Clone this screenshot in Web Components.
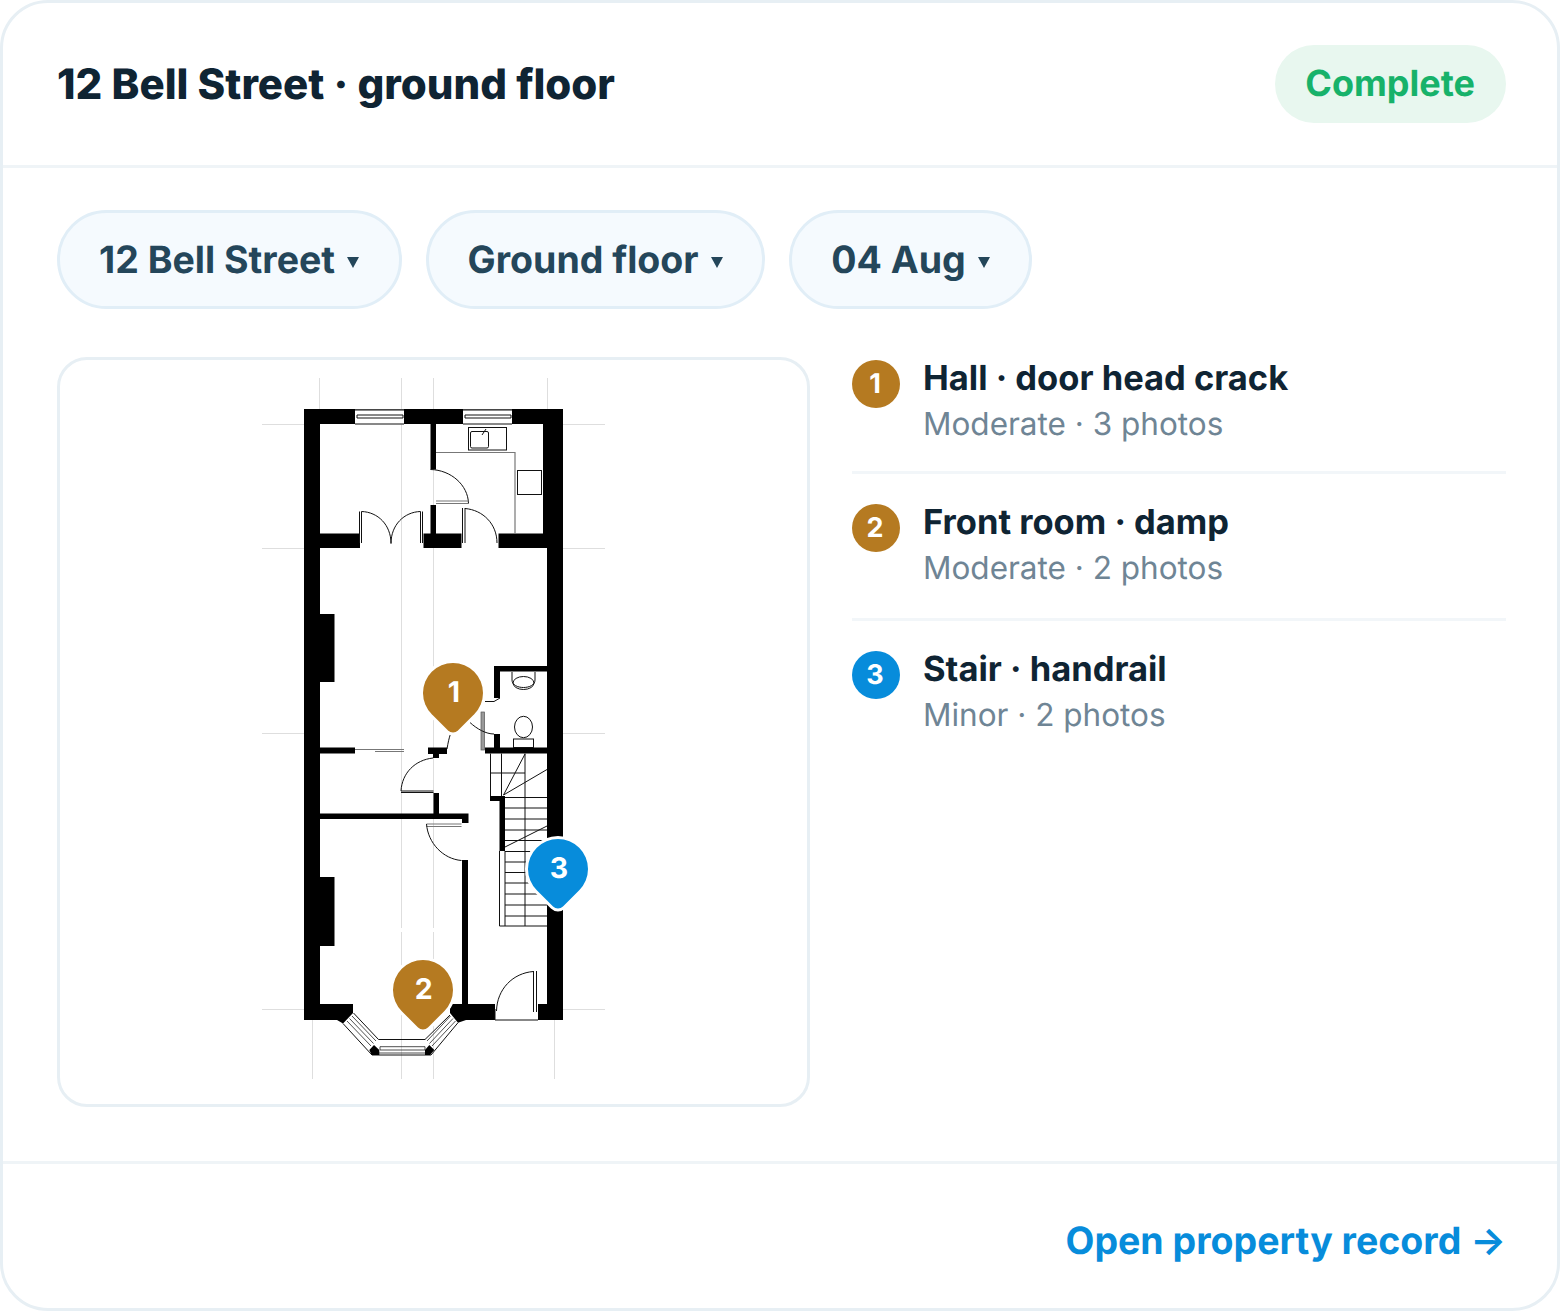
<!doctype html>
<html lang="en">
<head>
<meta charset="utf-8">
<title>Floor plan card</title>
<style>
  html, body { margin: 0; background: #fff; }
  body { font-family: Inter, "Liberation Sans", sans-serif; text-rendering: geometricPrecision; }
</style>
</head>
<body>

<template id="plan-card-template">
  <style>
    :host { display: flex; flex-direction: column; box-sizing: border-box; width: 1560px; height: 1311px; background: #fff; border: 3px solid #e7eff4; border-radius: 48px; color: #0f2433; overflow: hidden; }
    header { display: flex; align-items: center; justify-content: space-between; box-sizing: border-box; height: 165px; padding: 0 51px 0 54px; border-bottom: 3px solid #eff4f7; flex: none; }
    h1 { margin: 2px 0 0; font-size: 42px; line-height: 52px; font-weight: 800; }
    main { flex: 1; box-sizing: border-box; padding: 42px 51px 0 54px; }
    .filters { display: flex; gap: 24px; margin-bottom: 48px; }
    .body { display: grid; grid-template-columns: 753px 1fr; column-gap: 42px; }
    footer { display: flex; justify-content: flex-end; align-items: center; box-sizing: border-box; height: 147px; padding: 10px 51px 0 54px; border-top: 3px solid #eff4f7; flex: none; }
  </style>
  <header>
    <h1><slot name="title"></slot></h1>
    <slot name="status"></slot>
  </header>
  <main>
    <div class="filters"><slot name="filters"></slot></div>
    <div class="body">
      <slot name="plan"></slot>
      <div><slot name="issues"></slot></div>
    </div>
  </main>
  <footer><slot name="footer"></slot></footer>
</template>

<template id="status-badge-template">
  <style>
    :host { display: inline-flex; align-items: center; box-sizing: border-box; height: 78px; padding: 0 31px 2px 30px; border-radius: 39px; background: #e8f7ef; color: #17b26a; font-size: 36px; font-weight: 700; }
  </style>
  <slot></slot>
</template>

<template id="filter-pill-template">
  <style>
    :host { display: inline-flex; align-items: center; box-sizing: border-box; height: 99px; padding: 2px 39.5px 0 39px; border: 3px solid #e1eef7; border-radius: 50px; background: #f5fafe; color: #24465a; font-size: 37.5px; font-weight: 700; white-space: nowrap; }
    .caret { margin: 3px 0 0 12px; width: 0; height: 0; border-left: 6px solid transparent; border-right: 6px solid transparent; border-top: 11px solid #24465a; }
  </style>
  <slot></slot><span class="caret"></span>
</template>

<template id="floor-plan-template">
  <style>
    :host { display: block; position: relative; box-sizing: border-box; width: 753px; height: 750px; border: 3px solid #e7eff4; border-radius: 30px; background: #fff; overflow: hidden; }
    svg { display: block; width: 746px; height: 743px; }
    .grid { stroke: #dedede; stroke-width: 1; fill: none; }
    .thin { stroke: #111; stroke-width: 1; fill: none; }
    .grey { stroke: #777; stroke-width: 1.2; fill: none; }
    .fine { stroke: #222; stroke-width: .8; fill: none; }
  </style>
  <svg viewBox="60 360 746 743" aria-hidden="true">
    <g class="grid">
      <path d="M319.5 378V409M401.5 378V928M401.5 932V1079M433.5 378V928M433.5 932V1079M547.5 378V409"/>
      <path d="M312.5 1020V1079M554.5 1020V1079"/>
      <path d="M262 424.5H304M563 424.5H605M262 548.5H304M563 548.5H605M262 733.5H304M563 733.5H605M262 1009.5H304M563 1009.5H605"/>
    </g>
    <!-- outer walls -->
    <path fill="#000" d="M304 409H563V1020H538V1004H547V548H543V424H512V424H320V1004H353V1013L343 1023.500L337 1020H304Z"/>
    <path fill="#000" d="M450 1004H495V1020H466L458 1022.700L450 1013Z"/>
    <!-- top windows -->
    <g>
      <rect x="355" y="409.5" width="49" height="15" fill="#fff"/>
      <rect x="463" y="409.5" width="49" height="15" fill="#fff"/>
      <path class="thin" d="M355 410H404M355 424H404M357 415H403M357 418H403M357 415V418M403 415V418M463 410H512M463 424H512M465 415H511M465 418H511M465 415V418M511 415V418"/>
    </g>
    <!-- upper partitions -->
    <path fill="#000" d="M430.5 424H436V469.5H430.5ZM430.5 505H436V533.5H430.5ZM320 533.5H360V548H320ZM423.5 533.5H461.5V548H423.5ZM498.5 533.5H543V548H498.5Z"/>
    <path class="thin" d="M359.5 511.5V543M361.5 511.5V543M361.5 511.5C378 512 391 525 391 543.5M420.5 511.5V543M422.5 511.5V543M420.5 511.5C404 512 391 525 391 543.5"/>
    <path class="thin" d="M462.5 508V543M465 508V543M465 508.5C483 510 497 524 497 543"/>
    <path class="thin" d="M430.5 469.5C451 470 468 485 468.5 503.5"/>
    <path class="grey" d="M436 503.5H468.5M436 501H468.5M436 452.5H515V533.5"/>
    <!-- kitchen fittings -->
    <rect class="thin" x="468.5" y="427.5" width="38" height="22.5"/>
    <rect class="thin" x="470.5" y="431.5" width="18" height="16.5" rx="1.5"/>
    <path class="thin" d="M482 435L486 429"/>
    <rect class="thin" x="517.5" y="470.5" width="24" height="24"/>
    <!-- chimney breasts -->
    <path fill="#000" d="M313 614H334.5V682H313ZM313 877H334.5V946H313Z"/>
    <!-- wc -->
    <path fill="#000" d="M494 666H547V671.5H500V698H494ZM494 734H500V748H494ZM320 747.5H355V753.5H320ZM428 747.5H447V754H439V758H433V754H428ZM485 747.5H547V753.5H485Z"/>
    <path class="thin" d="M485 701.5H494L500 698M512 672V680C512 690 535 690 535 680V672"/>
    <ellipse class="thin" cx="523.5" cy="683" rx="10.5" ry="6.5"/>
    <ellipse class="thin" cx="523.5" cy="727" rx="9" ry="10.7"/>
    <rect class="thin" x="513.5" y="739" width="20" height="8.5"/>
    <rect x="481" y="712" width="3.5" height="38" fill="#999" stroke="#555" stroke-width=".7"/>
    <path class="thin" d="M470 722.5C477 729 486 734 494 734"/>
    <path class="thin" d="M447 749C448 743 449 738 450.5 734"/>
    <path class="grey" d="M355 749.5H404M375 751.5H404"/>
    <!-- hall partition -->
    <path class="thin" d="M433 758C415 760 402 773 401 791M401 791H433.5M401 792.5H433.5"/>
    <path fill="#000" d="M433.5 793H439V813.5H433.5ZM320 813.5H468.5V823H462V819H320Z"/>
    <path class="grey" d="M426.5 824H461.5M426.5 826.5H461.5"/>
    <path class="thin" d="M426.5 824C428 843 443 859 461.5 860.5"/>
    <path fill="#000" d="M462 860H468V1004H462Z"/>
    <!-- stairs -->
    <path fill="#000" d="M490 796H505V851H499.5V801H490Z"/>
    <path class="thin" d="M490.5 753.5V796M501.5 753.5V796M490.5 773H525M525 753.5V926M499.5 851V926M505 851V926M499.5 926H547"/>
    <path class="thin" d="M505 797.5H547M505 808H547M505 819H547M505 830H547M505 840.5H547M505 851.5H547M505 862H547M505 872.5H547M505 883H547M505 894H547M505 905H547M505 916H547"/>
    <path class="thin" d="M503.5 795L525 754M503.5 795L547 769.5M505 847L547 826"/>
    <!-- entrance door -->
    <path class="thin" d="M533.5 971V1012M536.5 971V1012M533.5 971.5C513 973 497 989 496.5 1011M495 1009V1020M495 1020H538"/>
    <!-- bay window -->
    <path class="thin" d="M353.5 1013L378.5 1039.500H425L450 1015M343 1023.500L372 1055H431L458 1022.700"/>
    <path class="fine" d="M347 1021L371 1046M349.500 1018.500L373.500 1043.500M352 1016L376 1041M455.500 1021L432 1046M453 1018.500L429.500 1043.500M450.500 1016L427 1041M380 1046.700H425M380 1050H425M380 1046.700V1050M425 1046.700V1050M372 1053H431"/>
    <path fill="#000" d="M369.300 1050L374 1045L379.300 1050V1055H371.700ZM425 1050L429.300 1045L434.300 1050L430 1055H425Z"/>
  </svg>
  <slot></slot>
</template>

<template id="plan-pin-template">
  <style>
    :host { position: absolute; display: block; width: 60px; height: 60px; margin: -30px 0 0 -30px; }
    .drop { display: flex; align-items: center; justify-content: center; width: 60px; height: 60px; border-radius: 50% 50% 7px 50%; transform: rotate(45deg); background: var(--pin-color, #b57a21); box-shadow: 0 0 0 3px #fff; }
    .num { transform: rotate(-45deg) translate(1px, -1px); color: #fff; font-size: 28.5px; font-weight: 700; line-height: 1; }
  </style>
  <div class="drop"><span class="num"><slot></slot></span></div>
</template>

<template id="issue-item-template">
  <style>
    :host { display: grid; grid-template-columns: 48px 1fr; column-gap: 23px; box-sizing: border-box; padding: 30px 0 29px; border-bottom: 3px solid #f2f6f9; }
    :host(:first-child) { padding: 3px 0 26px; }
    :host(:last-child) { border-bottom: 0; }
    .num { display: flex; align-items: center; justify-content: center; box-sizing: border-box; width: 48px; height: 48px; padding: 0 2px 2px 0; border-radius: 50%; background: var(--pin-color, #b57a21); color: #fff; font-size: 27px; font-weight: 700; }
    .title { color: #0f2433; font-size: 34.5px; line-height: 42px; font-weight: 700; margin-top: -2px; }
    .meta { color: #6f8595; font-size: 31.5px; line-height: 42px; margin-top: 3px; }
  </style>
  <div class="num"><slot name="num"></slot></div>
  <div>
    <div class="title"><slot name="title"></slot></div>
    <div class="meta"><slot name="meta"></slot></div>
  </div>
</template>

<template id="record-link-template">
  <style>
    :host { display: inline-block; color: #078cdb; font-size: 37.5px; font-weight: 700; white-space: nowrap; }
  </style>
  <slot></slot>
</template>

<plan-card>
  <span slot="title">12 Bell Street · ground floor</span>
  <status-badge slot="status">Complete</status-badge>

  <filter-pill slot="filters">12 Bell Street</filter-pill>
  <filter-pill slot="filters">Ground floor</filter-pill>
  <filter-pill slot="filters">04 Aug</filter-pill>

  <floor-plan slot="plan">
    <plan-pin style="left:393px;top:333px">1</plan-pin>
    <plan-pin style="left:363px;top:630px">2</plan-pin>
    <plan-pin style="left:498px;top:509px;--pin-color:#078cdb">3</plan-pin>
  </floor-plan>

  <div slot="issues">
    <issue-item>
      <span slot="num">1</span>
      <span slot="title">Hall · door head crack</span>
      <span slot="meta">Moderate · 3 photos</span>
    </issue-item>
    <issue-item>
      <span slot="num">2</span>
      <span slot="title">Front room · damp</span>
      <span slot="meta">Moderate · 2 photos</span>
    </issue-item>
    <issue-item style="--pin-color:#078cdb">
      <span slot="num">3</span>
      <span slot="title">Stair · handrail</span>
      <span slot="meta">Minor · 2 photos</span>
    </issue-item>
  </div>

  <record-link slot="footer">Open property record →</record-link>
</plan-card>

<script>
  function register(tag) {
    const templ = document.querySelector('#' + tag + '-template');
    customElements.define(tag, class extends HTMLElement {
      constructor() {
        super();
        this.attachShadow({mode: 'open'}).appendChild(templ.content.cloneNode(true));
      }
    });
  }
  ['plan-card', 'status-badge', 'filter-pill', 'floor-plan', 'plan-pin', 'issue-item', 'record-link'].forEach(register);
</script>
</body>
</html>
